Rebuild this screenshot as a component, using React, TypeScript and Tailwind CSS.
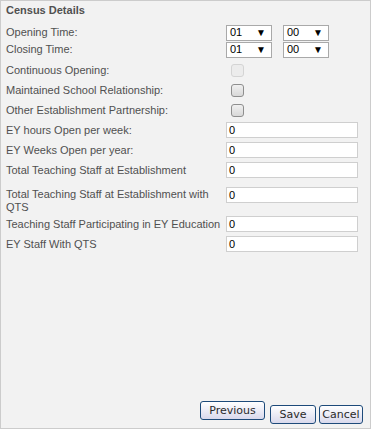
const font = { fontFamily: '"Liberation Sans", Arial, sans-serif' };

const labelCls = "w-[220px] shrink-0 text-[11px] leading-[13px] text-[#505050]";

const FakeSelect = ({value}: {value: string}) => (
    <div className="w-[46px] h-[16px] bg-white border border-[#a9a9a9] flex items-center justify-between pl-[3px] pr-[5px] text-[11px] text-black">
        <span>{value}</span>
        <span className="text-[10px] leading-none">▼</span>
    </div>
);

const Check = ({disabled}: {disabled?: boolean}) => (
    <div
        className={
            disabled
                ? "ml-[5px] w-[13px] h-[13px] rounded-[3px] border border-[#d4d4d4] bg-[#ececec]"
                : "ml-[5px] w-[13px] h-[13px] rounded-[3px] border border-[#8e8e8e] bg-gradient-to-b from-[#f0f0f0] to-[#d8d8d8]"
        }
    />
);

const TextBox = () => (
    <div className="w-[132px] h-[16px] bg-white border border-[#cfcfcf] flex items-center pl-[2px] text-[11px] text-black">
        0
    </div>
);

const Btn = ({children, w}: {children: string; w: string}) => (
    <button
        className={`${w} h-[19px] rounded-[3px] border border-[#1d4a7a] bg-gradient-to-b from-white to-[#d9d9ec] text-[11px] text-[#2a2a2a] leading-none`}
        style={{fontFamily: '"DejaVu Sans", Verdana, sans-serif'}}
    >
        {children}
    </button>
);

const App = () => {
    const inputRows = [
        'EY hours Open per week:',
        'EY Weeks Open per year:',
        'Total Teaching Staff at Establishment',
    ];

    return (
        <div style={font} className="w-[372px] h-[432px] bg-white">
            <div className="w-[371px] h-[429px] border border-[#cccccc] bg-[#f2f2f2] flex flex-col pl-[5px]">
                <div className="h-[17px] pt-[3px] text-[11px] leading-[13px] font-bold text-[#505050]">Census Details</div>

                <div className="mt-[6px] flex items-center h-[17px]">
                    <div className={labelCls}>Opening Time:</div>
                    <div className="flex gap-[11px]">
                        <FakeSelect value="01"/>
                        <FakeSelect value="00"/>
                    </div>
                </div>
                <div className="flex items-center h-[17px]">
                    <div className={labelCls}>Closing Time:</div>
                    <div className="flex gap-[11px]">
                        <FakeSelect value="01"/>
                        <FakeSelect value="00"/>
                    </div>
                </div>

                <div className="mt-[2px] flex items-center h-[20px]">
                    <div className={labelCls}>Continuous Opening:</div>
                    <Check disabled/>
                </div>
                <div className="flex items-center h-[20px]">
                    <div className={labelCls}>Maintained School Relationship:</div>
                    <Check/>
                </div>
                <div className="flex items-center h-[20px]">
                    <div className={labelCls}>Other Establishment Partnership:</div>
                    <Check/>
                </div>

                {inputRows.map((label) => (
                    <div key={label} className="flex items-center h-[20px]">
                        <div className={labelCls}>{label}</div>
                        <TextBox/>
                    </div>
                ))}

                <div className="mt-[7px] flex items-start h-[27px]">
                    <div className={`${labelCls} pt-[1px]`}>Total Teaching Staff at Establishment with QTS</div>
                    <TextBox/>
                </div>
                <div className="flex items-center h-[20px]">
                    <div className={labelCls}>Teaching Staff Participating in EY Education</div>
                    <TextBox/>
                </div>
                <div className="flex items-center h-[20px]">
                    <div className={labelCls}>EY Staff With QTS</div>
                    <TextBox/>
                </div>

                <div className="mt-auto flex justify-end pr-[7px] pb-[3px]">
                    <Btn w="w-[65px]">Previous</Btn>
                    <div className="ml-[5px]"><Btn w="w-[46px]">Save</Btn></div>
                    <div className="ml-[3px]"><Btn w="w-[44px]">Cancel</Btn></div>
                </div>
            </div>
        </div>
    );
};

export default App;
